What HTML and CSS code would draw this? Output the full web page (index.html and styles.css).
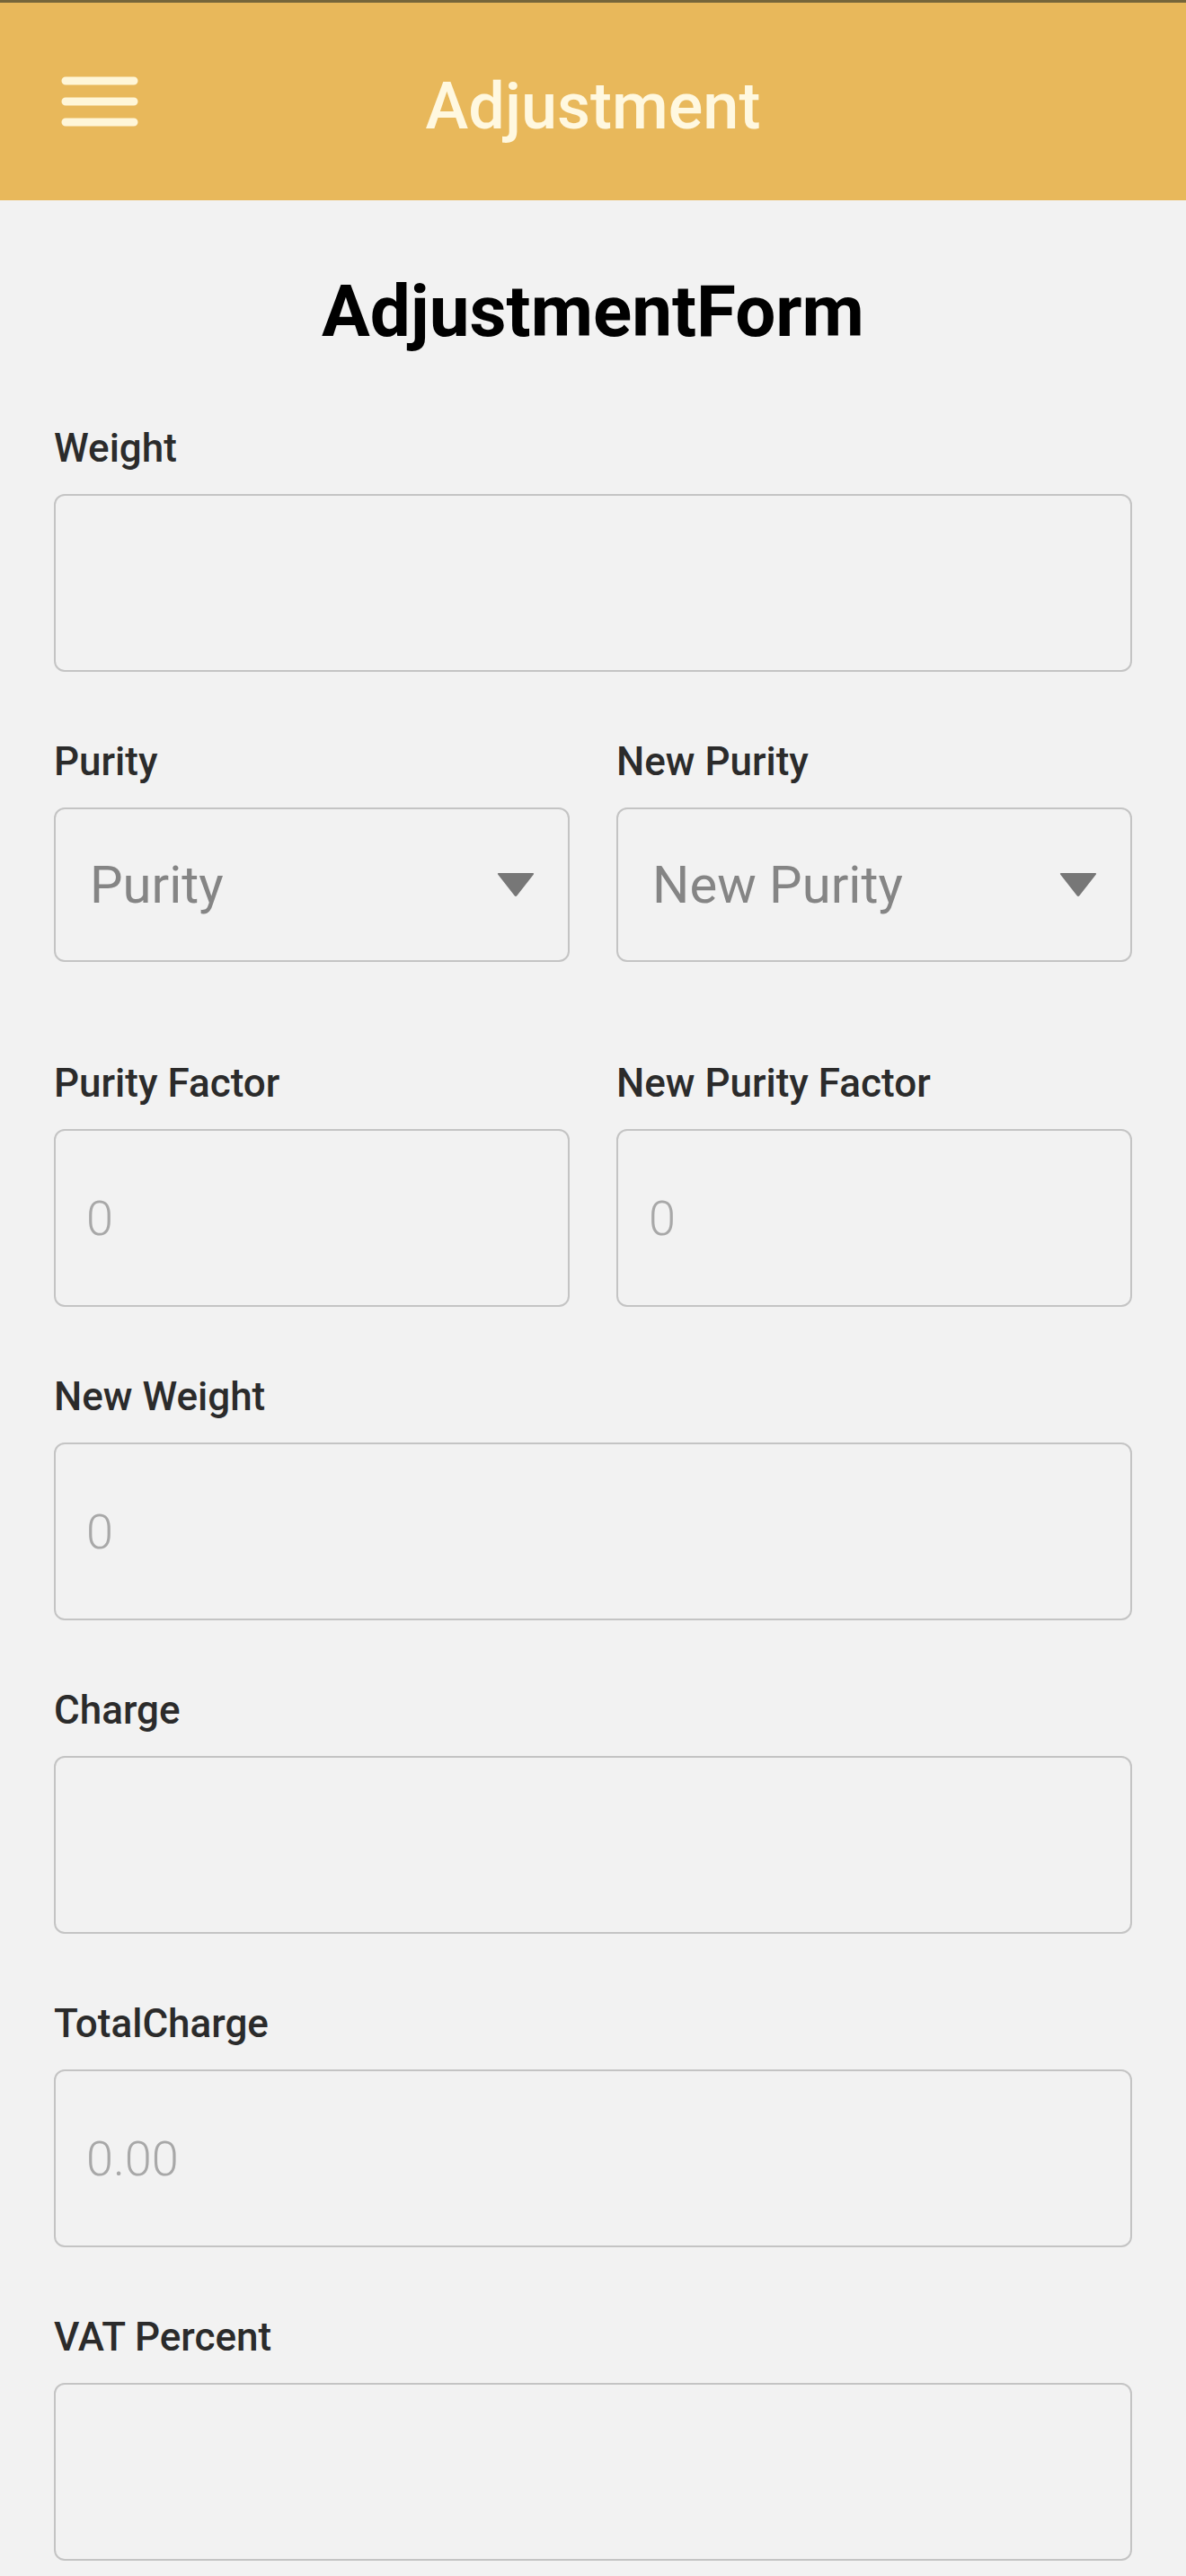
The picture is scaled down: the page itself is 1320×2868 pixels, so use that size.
FILE: index.html
```html
<!DOCTYPE html>
<html lang="en">
<head>
  <meta charset="UTF-8">
  <title>Adjustment</title>
  <link rel="stylesheet" href="styles.css">
</head>
<body>
  <header class="appbar">
    <button class="menu-btn" aria-label="Menu">
      <svg width="86" height="56" viewBox="0 0 86 56">
        <path d="M5 5H81M5 28H81M5 51H81" stroke="#fff6d8" stroke-width="9" stroke-linecap="round"/>
      </svg>
    </button>
    <div class="appbar-title">Adjustment</div>
    <div></div>
  </header>

  <main class="form">
    <h1 class="form-title">AdjustmentForm</h1>

    <div class="field">
      <label class="field-label">Weight</label>
      <input class="field-input" type="text">
    </div>

    <div class="row row-select">
      <div class="field">
        <label class="field-label">Purity</label>
        <div class="field-select">
          <span>Purity</span>
          <svg width="44" height="30" viewBox="0 0 44 30"><path d="M3 2H41Q43 2 41.5 4L23.5 27Q22 29 20.5 27L2.5 4Q1 2 3 2Z" fill="#777"/></svg>
        </div>
      </div>
      <div class="field">
        <label class="field-label">New Purity</label>
        <div class="field-select">
          <span>New Purity</span>
          <svg width="44" height="30" viewBox="0 0 44 30"><path d="M3 2H41Q43 2 41.5 4L23.5 27Q22 29 20.5 27L2.5 4Q1 2 3 2Z" fill="#777"/></svg>
        </div>
      </div>
    </div>

    <div class="row">
      <div class="field">
        <label class="field-label">Purity Factor</label>
        <input class="field-input" type="text" placeholder="0">
      </div>
      <div class="field">
        <label class="field-label">New Purity Factor</label>
        <input class="field-input" type="text" placeholder="0">
      </div>
    </div>

    <div class="field">
      <label class="field-label">New Weight</label>
      <input class="field-input" type="text" placeholder="0">
    </div>

    <div class="field">
      <label class="field-label">Charge</label>
      <input class="field-input" type="text">
    </div>

    <div class="field">
      <label class="field-label">TotalCharge</label>
      <input class="field-input" type="text" placeholder="0.00">
    </div>

    <div class="field">
      <label class="field-label">VAT Percent</label>
      <input class="field-input" type="text">
    </div>
  </main>
</body>
</html>
```

FILE: styles.css
```css
body {
  margin: 0;
  background-color: #f2f2f2;
  font-family: Roboto, "Liberation Sans", sans-serif;
  overflow: hidden;
}
.appbar {
  height: 220px;
  background-color: #e8b85b;
  border-top: 3px solid #75653a;
  display: grid;
  grid-template-columns: 1fr auto 1fr;
  align-items: center;
}
.menu-btn {
  justify-self: start;
  margin-left: 68px;
  padding: 0;
  border: none;
  background: none;
  display: flex;
}
.appbar-title {
  color: #fff8e0;
  font-size: 72px;
  font-weight: 500;
  line-height: 80px;
  padding-top: 12px;
}
.form {
  padding: 0 60px;
}
.form-title {
  margin: 74px 0 77px;
  font-size: 80px;
  line-height: 100px;
  font-weight: 700;
  text-align: center;
  color: #000;
}
.field {
  margin-bottom: 75px;
}
.row .field {
  margin-bottom: 0;
}
.field-label {
  display: block;
  font-size: 44px;
  line-height: 50px;
  font-weight: 500;
  color: #2b2b2b;
  margin-bottom: 26px;
}
.field-input {
  display: block;
  box-sizing: border-box;
  width: 100%;
  height: 198px;
  border: 2px solid #c4c4c4;
  border-radius: 12px;
  background: transparent;
  padding: 0 34px;
  font-family: inherit;
  font-size: 54px;
  font-weight: 300;
  color: #333;
  outline: none;
}
.field-input::placeholder {
  color: #a8a8a8;
}
.row {
  display: grid;
  grid-template-columns: 1fr 1fr;
  gap: 52px;
  margin-bottom: 75px;
}
.row-select {
  margin-bottom: 110px;
}
.field-select {
  box-sizing: border-box;
  height: 172px;
  border: 2px solid #c4c4c4;
  border-radius: 12px;
  padding: 0 36px 0 38px;
  display: flex;
  align-items: center;
  justify-content: space-between;
  font-size: 58px;
  color: #858585;
}
```
